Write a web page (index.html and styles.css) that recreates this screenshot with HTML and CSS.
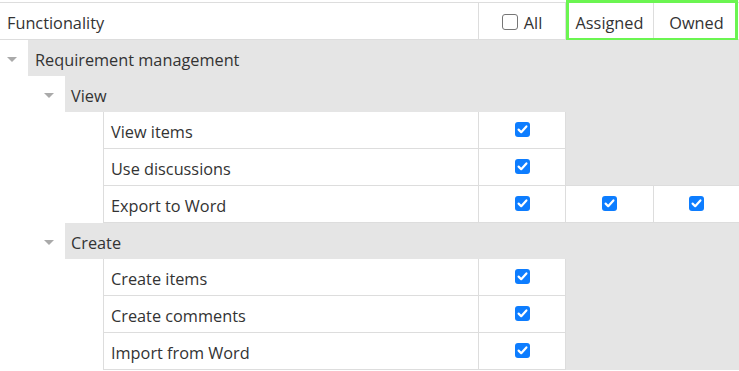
FILE: index.html
```html
<!DOCTYPE html>
<html lang="en">
  <head>
    <meta charset="UTF-8" />
    <meta name="viewport" content="width=device-width, initial-scale=1.0" />
    <title>Permissions</title>
    <link rel="stylesheet" href="styles.css">
  </head>
  <body>
    <div class="perm-table">
      <!-- header -->
      <div class="row head">
        <div class="cell name">Functionality</div>
        <div class="cell col all"><span class="box"></span>All</div>
        <div class="cell col role">Assigned</div>
        <div class="cell col role last">Owned</div>
        <span class="highlight"></span>
      </div>

      <div class="row group">
        <span class="caret"></span>
        <div class="label">Requirement management</div>
      </div>

      <div class="row group sub">
        <span class="caret"></span>
        <div class="label">View</div>
      </div>

      <div class="row leaf">
        <div class="indent"></div>
        <div class="cell name">View items</div>
        <div class="cell col all">
          <svg class="check" viewBox="0 0 15 15"><rect width="15" height="15" rx="3" /><path d="M3.6 7.6 L6.2 10.2 L11.4 4.4" /></svg>
        </div>
        <div class="rest"></div>
      </div>
      <div class="row leaf">
        <div class="indent"></div>
        <div class="cell name">Use discussions</div>
        <div class="cell col all">
          <svg class="check" viewBox="0 0 15 15"><rect width="15" height="15" rx="3" /><path d="M3.6 7.6 L6.2 10.2 L11.4 4.4" /></svg>
        </div>
        <div class="rest edge"></div>
      </div>
      <div class="row leaf">
        <div class="indent"></div>
        <div class="cell name">Export to Word</div>
        <div class="cell col all">
          <svg class="check" viewBox="0 0 15 15"><rect width="15" height="15" rx="3" /><path d="M3.6 7.6 L6.2 10.2 L11.4 4.4" /></svg>
        </div>
        <div class="cell col role">
          <svg class="check" viewBox="0 0 15 15"><rect width="15" height="15" rx="3" /><path d="M3.6 7.6 L6.2 10.2 L11.4 4.4" /></svg>
        </div>
        <div class="cell col role last">
          <svg class="check" viewBox="0 0 15 15"><rect width="15" height="15" rx="3" /><path d="M3.6 7.6 L6.2 10.2 L11.4 4.4" /></svg>
        </div>
      </div>

      <div class="row group sub">
        <span class="caret"></span>
        <div class="label">Create</div>
      </div>

      <div class="row leaf">
        <div class="indent"></div>
        <div class="cell name">Create items</div>
        <div class="cell col all">
          <svg class="check" viewBox="0 0 15 15"><rect width="15" height="15" rx="3" /><path d="M3.6 7.6 L6.2 10.2 L11.4 4.4" /></svg>
        </div>
        <div class="rest"></div>
      </div>
      <div class="row leaf">
        <div class="indent"></div>
        <div class="cell name">Create comments</div>
        <div class="cell col all">
          <svg class="check" viewBox="0 0 15 15"><rect width="15" height="15" rx="3" /><path d="M3.6 7.6 L6.2 10.2 L11.4 4.4" /></svg>
        </div>
        <div class="rest"></div>
      </div>
      <div class="row leaf">
        <div class="indent"></div>
        <div class="cell name">Import from Word</div>
        <div class="cell col all">
          <svg class="check" viewBox="0 0 15 15"><rect width="15" height="15" rx="3" /><path d="M3.6 7.6 L6.2 10.2 L11.4 4.4" /></svg>
        </div>
        <div class="rest"></div>
      </div>
    </div>
  </body>
</html>
```
FILE: styles.css
```css
* {
  box-sizing: border-box;
}
body {
  margin: 0;
  background-color: white;
  font-family: "Open Sans", "Noto Sans", sans-serif;
  font-size: 16.3px;
  color: #333;
}
.perm-table {
  width: 739px;
  margin-top: 2px;
  border-top: 1px solid #ddd;
}
.row {
  display: flex;
  position: relative;
}
.cell {
  display: flex;
  align-items: center;
  height: 37px;
  border-bottom: 1px solid #ddd;
}
.col {
  justify-content: center;
}
.name,
.label,
.head .col {
  padding-top: 3px;
}

/* header */
.head .cell {
  height: 37px;
}
.head .name {
  width: 479px;
  padding-left: 7px;
  border-right: 1px solid #ddd;
}
.head .all {
  width: 87px;
  border-right: 1px solid #ddd;
}
.head .role {
  width: 88px;
  border-right: 1px solid #ddd;
}
.head .last {
  flex: 1;
  border-right: none;
}
.box {
  width: 16px;
  height: 16px;
  margin: -2px 6px 0 0;
  border: 1.5px solid #767676;
  border-radius: 3px;
  background: white;
}
.highlight {
  position: absolute;
  left: 566px;
  top: -3px;
  width: 172px;
  height: 41px;
  border: 3px solid #6bf551;
}

/* group rows */
.group {
  height: 36px;
  align-items: center;
}
.caret {
  width: 0;
  height: 0;
  margin: 3px 11px 0 7px;
  border-left: 5px solid transparent;
  border-right: 5px solid transparent;
  border-top: 5px solid #aaa;
}
.group.sub .caret {
  margin-left: 44px;
}
.label {
  flex: 1;
  height: 36px;
  display: flex;
  align-items: center;
  padding-left: 7px;
  background-color: #e5e5e5;
}
.group.sub .label {
  padding-left: 6px;
}

/* leaf rows */
.leaf .indent {
  width: 103px;
}
.leaf .name {
  width: 375px;
  padding-left: 7px;
  border-left: 1px solid #ddd;
}
.leaf .all {
  width: 88px;
  border-left: 1px solid #ddd;
  border-right: 1px solid #ddd;
}
.leaf .role {
  width: 88px;
  border-right: 1px solid #ddd;
}
.leaf .last {
  flex: 1;
  border-right: none;
}
.rest {
  flex: 1;
  height: 37px;
  background-color: #e5e5e5;
}
.rest.edge {
  border-bottom: 1px solid #ddd;
}
.check {
  width: 15px;
  height: 15px;
  margin-top: -2px;
}
.check rect {
  fill: #0d7dff;
}
.check path {
  fill: none;
  stroke: white;
  stroke-width: 2.2;
  stroke-linecap: round;
  stroke-linejoin: round;
}
```
